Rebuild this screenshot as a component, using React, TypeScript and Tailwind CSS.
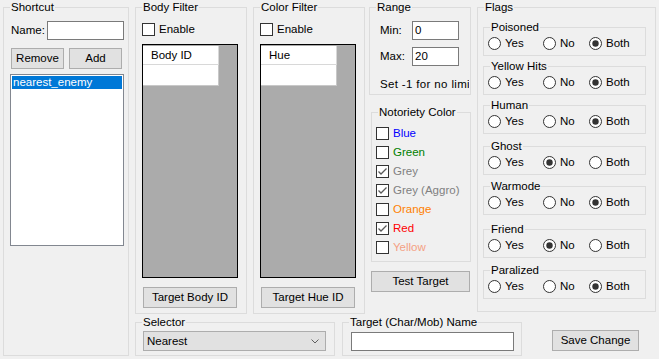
import type { ReactNode } from "react";
import clsx from "clsx";

function GroupBox({ title, className, children }: { title: string; className?: string; children?: ReactNode }) {
  return (
    <fieldset className={clsx("border border-[#dcdcdc] shrink-0", className)}>
      <legend className="ml-[6px] px-px font-normal">{title}</legend>
      {children}
    </fieldset>
  );
}

function Button({ label, className }: { label: string; className?: string }) {
  return (
    <div className={clsx("flex items-center justify-center bg-[#e1e1e1] border border-[#adadad] shrink-0", className)}>
      {label}
    </div>
  );
}

function TextBox({ value, className }: { value?: string; className?: string }) {
  return (
    <div className={clsx("bg-white border border-[#7a7a7a] flex items-center pl-[2px] shrink-0", className)}>
      {value}
    </div>
  );
}

function CheckBox({ checked }: { checked?: boolean }) {
  return (
    <span className="w-[13px] h-[13px] border border-[#333333] bg-white shrink-0 flex items-center justify-center">
      {checked && (
        <svg width="11" height="11" viewBox="0 0 11 11">
          <polyline points="1.5,5.5 4,8 9.5,2.5" fill="none" stroke="#5a5a5a" strokeWidth="1.3" />
        </svg>
      )}
    </span>
  );
}

function Radio({ checked }: { checked?: boolean }) {
  return (
    <svg width="13" height="13" viewBox="0 0 13 13" className="shrink-0">
      <circle cx="6.5" cy="6.5" r="6" fill="#ffffff" stroke="#333333" strokeWidth="1" />
      {checked && <circle cx="6.5" cy="6.5" r="3.2" fill="#333333" />}
    </svg>
  );
}

function DataGrid({ header }: { header: string }) {
  return (
    <div className="w-[96px] h-[234px] border border-black bg-[#ababab] pt-px mt-[8px]">
      <div className="w-[76px] h-[19px] bg-white border-r border-b border-[#d8d8d8] flex items-center pl-[8px]">
        {header}
      </div>
      <div className="w-[76px] h-[21px] bg-white border-r border-b border-[#c8c8c8]" />
    </div>
  );
}

const notoriety = [
  { label: "Blue", color: "text-[#0000ff]", checked: false },
  { label: "Green", color: "text-[#008000]", checked: false },
  { label: "Grey", color: "text-[#808080]", checked: true },
  { label: "Grey (Aggro)", color: "text-[#808080]", checked: true },
  { label: "Orange", color: "text-[#ff8000]", checked: false },
  { label: "Red", color: "text-[#ff0000]", checked: true },
  { label: "Yellow", color: "text-[#f4a184]", checked: false },
];

const flags = [
  { title: "Poisoned", value: 2, gap: "mt-[7px]" },
  { title: "Yellow Hits", value: 2, gap: "mt-[4px]" },
  { title: "Human", value: 2, gap: "mt-[4px]" },
  { title: "Ghost", value: 1, gap: "mt-[6px]" },
  { title: "Warmode", value: 2, gap: "mt-[5px]" },
  { title: "Friend", value: 1, gap: "mt-[8px]" },
  { title: "Paralized", value: 2, gap: "mt-[6px]" },
];

const options = [
  { label: "Yes", width: "w-[55px]" },
  { label: "No", width: "w-[46px]" },
  { label: "Both", width: "" },
];

export default function App() {
  return (
    <div className="w-[659px] h-[359px] bg-[#f0f0f0] flex items-start text-black text-[11.5px] leading-[13px] font-['Liberation_Sans',Arial,sans-serif] overflow-hidden select-none">
      {/* Shortcut */}
      <GroupBox title="Shortcut" className="ml-[3px] mt-[1px] w-[126px] h-[355px]">
        <div className="ml-[6px] mt-[7px] w-[114px]">
          <div className="flex items-center justify-between">
            <span className="pl-px">Name:</span>
            <TextBox className="w-[77px] h-[19px]" />
          </div>
          <div className="flex mt-[8px]">
            <Button label="Remove" className="ml-px w-[53px] h-[21px]" />
            <Button label="Add" className="ml-[5px] w-[53px] h-[21px]" />
          </div>
          <div className="mt-[5px] w-[114px] h-[172px] border border-[#828790] bg-white p-px">
            <div className="h-[13px] bg-[#0078d7] text-white pl-px">nearest_enemy</div>
          </div>
        </div>
      </GroupBox>

      <div className="ml-[6px] mt-[1px] flex flex-col">
        <div className="flex items-start">
          {/* Body Filter */}
          <GroupBox title="Body Filter" className="w-[112px] h-[313px]">
            <div className="ml-[6px]">
              <div className="flex items-center mt-[9px] h-[13px]">
                <CheckBox />
                <span className="ml-[4px]">Enable</span>
              </div>
              <DataGrid header="Body ID" />
              <Button label="Target Body ID" className="ml-px mt-[9px] w-[94px] h-[21px]" />
            </div>
          </GroupBox>

          {/* Color Filter */}
          <GroupBox title="Color Filter" className="ml-[6px] w-[112px] h-[313px]">
            <div className="ml-[6px]">
              <div className="flex items-center mt-[9px] h-[13px]">
                <CheckBox />
                <span className="ml-[4px]">Enable</span>
              </div>
              <DataGrid header="Hue" />
              <Button label="Target Hue ID" className="ml-px mt-[9px] w-[94px] h-[21px]" />
            </div>
          </GroupBox>

          {/* Range + Notoriety */}
          <div className="ml-[4px] w-[102px] flex flex-col">
            <GroupBox title="Range" className="w-[102px] h-[94px]">
              <div className="mt-[7px] flex items-center">
                <span className="w-[42px] pl-[10px]">Min:</span>
                <TextBox value="0" className="w-[47px] h-[19px]" />
              </div>
              <div className="mt-[7px] flex items-center">
                <span className="w-[42px] pl-[10px]">Max:</span>
                <TextBox value="20" className="w-[47px] h-[19px]" />
              </div>
              <div className="mt-[12px] w-[99px] pl-[10px] whitespace-nowrap overflow-hidden tracking-[0.35px]">
                Set -1 for no limit
              </div>
            </GroupBox>

            <GroupBox title="Notoriety Color" className="ml-[2px] mt-[11px] w-[100px] h-[156px]">
              <div className="ml-[4px] mt-[8px] flex flex-col gap-[6px]">
                {notoriety.map((n) => (
                  <div key={n.label} className="flex items-center h-[13px]">
                    <CheckBox checked={n.checked} />
                    <span className={clsx("ml-[4px] whitespace-nowrap", n.color)}>{n.label}</span>
                  </div>
                ))}
              </div>
            </GroupBox>

            <Button label="Test Target" className="ml-[2px] mt-[9px] w-[99px] h-[21px]" />
          </div>

          {/* Flags */}
          <GroupBox title="Flags" className="ml-[6px] w-[179px] h-[311px]">
            {flags.map((f) => (
              <GroupBox key={f.title} title={f.title} className={clsx("ml-[5px] w-[163px] h-[35px]", f.gap)}>
                <div className="ml-[4px] mt-[3px] flex items-center h-[13px]">
                  {options.map((o, i) => (
                    <div key={o.label} className={clsx("flex items-center", o.width)}>
                      <Radio checked={f.value === i} />
                      <span className="ml-[4px]">{o.label}</span>
                    </div>
                  ))}
                </div>
              </GroupBox>
            ))}
          </GroupBox>
        </div>

        <div className="flex items-start mt-[2px]">
          <GroupBox title="Selector" className="w-[200px] h-[40px]">
            <div className="ml-[7px] mt-[2px] w-[183px] h-[20px] bg-[#e1e1e1] border border-[#adadad] flex items-center justify-between pl-[3px] pr-[6px]">
              <span>Nearest</span>
              <svg width="8" height="5" viewBox="0 0 8 5">
                <polyline points="0.5,0.5 4,4 7.5,0.5" fill="none" stroke="#606060" strokeWidth="1" />
              </svg>
            </div>
          </GroupBox>
          <GroupBox title="Target (Char/Mob) Name" className="ml-[7px] w-[180px] h-[40px]">
            <TextBox className="ml-[8px] mt-[3px] w-[163px] h-[19px]" />
          </GroupBox>
          <Button label="Save Change" className="ml-[30px] mt-[14px] w-[87px] h-[21px]" />
        </div>
      </div>
    </div>
  );
}
